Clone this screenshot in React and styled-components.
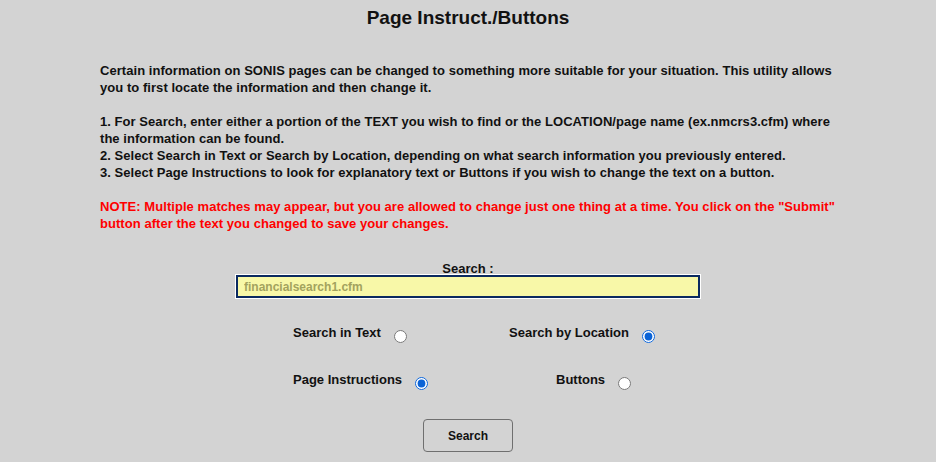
import React from "react";
import styled, { createGlobalStyle } from "styled-components";

const Global = createGlobalStyle`
  html, body { margin: 0; padding: 0; background: #d3d3d3; }
  body { font-family: "Liberation Sans", Arial, sans-serif; color: #111; }
`;

const Page = styled.div`
  width: 936px;
  min-height: 462px;
  display: flex;
  flex-direction: column;
  align-items: center;
`;

const Title = styled.h1`
  margin: 7px 0 0;
  font-size: 19px;
  line-height: 22px;
  font-weight: bold;
`;

const Instructions = styled.div`
  width: 736px;
  margin-top: 33px;
  font-size: 13px;
  line-height: 17px;
  font-weight: bold;
  letter-spacing: 0.05px;
`;

const Note = styled.span`
  color: #ff0000;
`;

const SearchBlock = styled.div`
  margin-top: 30px;
  display: flex;
  flex-direction: column;
  align-items: center;
`;

const Label = styled.label`
  font-size: 13px;
  font-weight: bold;
  line-height: 13px;
`;

const TextInput = styled.input`
  box-sizing: border-box;
  width: 464px;
  height: 23px;
  margin: 0;
  padding: 0 6px;
  background: #f8f8a8;
  border: 2px solid #0b2a60;
  box-shadow: 0 0 0 1px #ffffff;
  outline: none;
  font-family: "Liberation Sans", Arial, sans-serif;
  font-size: 12px;
  font-weight: bold;
  color: #a3a35e;
`;

const Options = styled.div`
  margin-top: 25px;
  width: 350px;
  display: grid;
  grid-template-columns: 216px 134px;
  row-gap: 27px;
`;

const Choice = styled.label`
  display: flex;
  align-items: center;
  gap: 13px;
  white-space: nowrap;
  padding-left: ${(p) => p.$indent || 0}px;
  font-size: 13px;
  font-weight: bold;
  line-height: 20px;
`;

const Radio = styled.input.attrs({ type: "radio" })`
  margin: 6px 0 0;
  width: 13px;
  height: 13px;
  flex: none;
  accent-color: #0b63d6;
`;

const Button = styled.button`
  margin-top: 29px;
  width: 90px;
  height: 33px;
  border: 1px solid #6f6f6f;
  border-radius: 4px;
  background: #d3d3d3;
  font-family: "Liberation Sans", Arial, sans-serif;
  font-size: 12px;
  font-weight: bold;
  color: #111;
`;

export default function App() {
  return (
    <Page>
      <Global />
      <Title>Page Instruct./Buttons</Title>
      <Instructions>
        Certain information on SONIS pages can be changed to something more
        suitable for your situation. This utility allows you to first locate the
        information and then change it.
        <br />
        <br />
        1. For Search, enter either a portion of the TEXT you wish to find or the
        LOCATION/page name (ex.nmcrs3.cfm) where the information can be found.
        <br />
        2. Select Search in Text or Search by Location, depending on what search
        information you previously entered.
        <br />
        3. Select Page Instructions to look for explanatory text or Buttons if
        you wish to change the text on a button.
        <br />
        <br />
        <Note>
          NOTE: Multiple matches may appear, but you are allowed to change just
          one thing at a time. You click on the "Submit" button after the text
          you changed to save your changes.
        </Note>
      </Instructions>
      <SearchBlock>
        <Label htmlFor="search">Search :</Label>
        <TextInput id="search" defaultValue="financialsearch1.cfm" />
      </SearchBlock>
      <Options>
        <Choice>
          Search in Text <Radio name="mode" />
        </Choice>
        <Choice>
          Search by Location <Radio name="mode" defaultChecked />
        </Choice>
        <Choice>
          Page Instructions <Radio name="kind" defaultChecked />
        </Choice>
        <Choice $indent={47}>
          Buttons <Radio name="kind" />
        </Choice>
      </Options>
      <Button>Search</Button>
    </Page>
  );
}
